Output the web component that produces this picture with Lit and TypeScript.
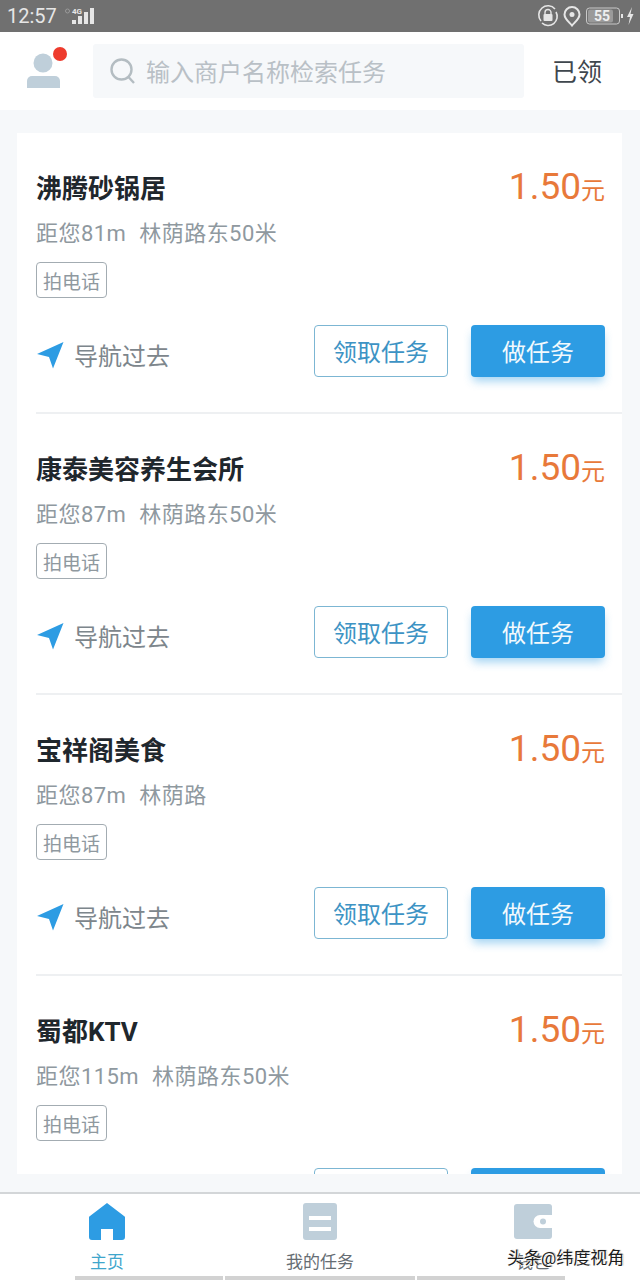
import { LitElement, html, css } from "lit";
import { customElement } from "lit/decorators.js";

const tasks = [
  { name: "沸腾砂锅居", dist: "距您81m", addr: "林荫路东50米" },
  { name: "康泰美容养生会所", dist: "距您87m", addr: "林荫路东50米" },
  { name: "宝祥阁美食", dist: "距您87m", addr: "林荫路" },
  { name: "蜀都KTV", dist: "距您115m", addr: "林荫路东50米" },
];

@customElement("app-root")
export class AppRoot extends LitElement {
  static styles = css`
    :host {
      display: flex;
      flex-direction: column;
      width: 640px;
      height: 1280px;
      overflow: hidden;
      background: #f6f8fa;
      font-family: Roboto, "Noto Sans CJK SC", sans-serif;
      position: relative;
    }

    /* status bar */
    .status {
      height: 32px;
      flex: none;
      background: #707070;
      color: #e6e6e6;
      display: flex;
      align-items: center;
      padding: 0 5px 0 7px;
      box-sizing: border-box;
    }
    .time {
      font-size: 20px;
      line-height: 32px;
      margin-right: 8px;
    }
    .spacer {
      flex: 1;
    }
    .status svg {
      display: block;
    }

    /* header */
    .header {
      height: 78px;
      flex: none;
      background: #fff;
      display: flex;
      align-items: center;
      box-sizing: border-box;
      padding-left: 27px;
    }
    .avatar {
      width: 66px;
      flex: none;
      margin-bottom: 4px;
    }
    .avatar svg {
      display: block;
    }
    .search {
      width: 431px;
      height: 54px;
      flex: none;
      background: #f6f8fa;
      border-radius: 3px;
      display: flex;
      align-items: center;
      gap: 10px;
      padding-left: 17px;
      box-sizing: border-box;
      font-size: 24px;
      color: #b9c0c6;
    }
    .search span {
      margin-top: -2px;
    }
    .taken {
      font-size: 25px;
      color: #3f474e;
      margin: -2px 0 0 28px;
    }

    /* list */
    .main {
      flex: 1;
      min-height: 0;
      padding: 23px 18px 18px 17px;
      display: flex;
    }
    .card {
      flex: 1;
      background: #fff;
      overflow: hidden;
    }
    .task {
      height: 281px;
      box-sizing: border-box;
      margin-left: 19px;
      padding: 35px 17px 0 0;
      border-bottom: 2px solid #eef0f2;
      display: flex;
      flex-direction: column;
    }
    .top {
      display: flex;
      justify-content: space-between;
      align-items: flex-start;
      height: 42px;
    }
    .name {
      font-size: 26px;
      font-weight: 700;
      line-height: 42px;
      color: #1f272d;
    }
    .price {
      color: #e8793a;
      font-size: 37px;
      line-height: 36px;
      margin-top: 1px;
    }
    .price span {
      font-size: 24px;
    }
    .sub {
      font-size: 22px;
      line-height: 32px;
      letter-spacing: 0.45px;
      color: #8f999f;
      margin-top: 8px;
      display: flex;
      gap: 13px;
    }
    .tag {
      align-self: flex-start;
      margin-top: 12px;
      width: 71px;
      height: 36px;
      box-sizing: border-box;
      border: 1.5px solid #a3acb2;
      border-radius: 4px;
      font-size: 19px;
      color: #8f999f;
      display: flex;
      align-items: center;
      justify-content: center;
    }
    .actions {
      display: flex;
      align-items: center;
      margin-top: 27px;
    }
    .nav {
      display: flex;
      align-items: center;
      gap: 10px;
      font-size: 24px;
      color: #7d868c;
      flex: 1;
      padding-top: 7px;
    }
    .nav svg {
      display: block;
    }
    .btn {
      width: 134px;
      height: 52px;
      box-sizing: border-box;
      border-radius: 4px;
      font-size: 24px;
      padding-bottom: 2px;
      display: flex;
      align-items: center;
      justify-content: center;
    }
    .ghost {
      border: 1.5px solid #7cb6d3;
      color: #3d93c4;
      background: #fff;
      margin-right: 23px;
    }
    .solid {
      background: #2d9ce3;
      color: #f2f9fd;
      box-shadow: 0 6px 10px -2px rgba(45, 156, 227, 0.45);
    }

    /* bottom tabs */
    .tabs {
      height: 86px;
      flex: none;
      background: #fff;
      border-top: 2px solid #d3d6d8;
      display: flex;
      position: relative;
    }
    .tab {
      position: relative;
      flex: none;
      display: flex;
      flex-direction: column;
      align-items: center;
      font-size: 17px;
      color: #666d73;
      padding-top: 9px;
      box-sizing: border-box;
    }
    .tab span {
      line-height: 22px;
      margin-top: 10px;
    }
    .tab.active {
      color: #3fa6cc;
    }
    .gestures {
      position: absolute;
      left: 0;
      right: 0;
      bottom: 0;
      height: 4px;
    }
    .gestures i {
      position: absolute;
      top: 0;
      height: 4px;
      background: #d2d2d2;
    }
    .mark {
      position: absolute;
      left: 507px;
      top: 1247px;
      font-size: 17px;
      line-height: 22px;
      color: #1c1c1c;
      text-shadow: 1px 1px 0 #fff, -1px 0 0 #fff, 1px 0 1px #888;
      white-space: nowrap;
    }
  `;

  private arrow() {
    return html`<svg width="28" height="28" viewBox="0 0 28 28">
      <path d="M27.500 1 L1 13 L13 16 L17 27.500 Z" fill="#2d9ce3" />
    </svg>`;
  }

  private renderTask(t: (typeof tasks)[number]) {
    return html`<div class="task">
      <div class="top">
        <div class="name">${t.name}</div>
        <div class="price">1.50<span>元</span></div>
      </div>
      <div class="sub"><span>${t.dist}</span><span>${t.addr}</span></div>
      <div class="tag">拍电话</div>
      <div class="actions">
        <div class="nav">${this.arrow()}<span>导航过去</span></div>
        <div class="btn ghost">领取任务</div>
        <div class="btn solid">做任务</div>
      </div>
    </div>`;
  }

  render() {
    return html`
      <div class="status">
        <span class="time">12:57</span>
        <svg width="32" height="22" viewBox="0 0 32 22">
          <circle cx="2.500" cy="6" r="2" fill="none" stroke="#9a9a9a" stroke-width="1" />
          <text x="7" y="9" font-size="8" font-weight="700" fill="#e6e6e6">4G</text>
          <rect x="7" y="15" width="4" height="4" fill="#e6e6e6" />
          <rect x="13" y="11" width="4" height="8" fill="#e6e6e6" />
          <rect x="19" y="7" width="4" height="12" fill="#e6e6e6" />
          <rect x="25" y="3" width="4" height="16" fill="#e6e6e6" />
        </svg>
        <div class="spacer"></div>
        <svg width="98" height="24" viewBox="0 0 98 24">
          <path d="M4 17 A9 9 0 0 1 18 5 M19 8 A9 9 0 0 1 5 19" fill="none" stroke="#e6e6e6" stroke-width="1.600" />
          <rect x="6.500" y="10" width="9" height="7" rx="1" fill="#e6e6e6" />
          <path d="M8 10 V8.500 a3 3 0 0 1 6 0 V10" fill="none" stroke="#e6e6e6" stroke-width="1.400" />
          <path d="M35 3 a7.500 7.500 0 0 1 7.500 7.500 c0 4.500 -5 8 -7.500 11 c-2.500 -3 -7.500 -6.500 -7.500 -11 A7.500 7.500 0 0 1 35 3 Z" fill="none" stroke="#e6e6e6" stroke-width="2" />
          <circle cx="35" cy="10.500" r="2.500" fill="#e6e6e6" />
          <rect x="49.500" y="4" width="33" height="16" rx="3" fill="none" stroke="#c9c9c9" stroke-width="1" />
          <rect x="51" y="5.500" width="25" height="13" rx="2" fill="#9a9a9a" />
          <text x="65" y="17" font-size="14" font-weight="700" text-anchor="middle" fill="#eee">55</text>
          <rect x="84" y="10" width="2" height="4" fill="#e6e6e6" />
          <path d="M95 3 L90 13 H93 L91.500 21 L96.500 10 H93.500 Z" fill="#e6e6e6" />
        </svg>
      </div>

      <div class="header">
        <div class="avatar">
          <svg width="42" height="44" viewBox="0 0 42 44">
            <circle cx="16" cy="16" r="9.500" fill="#bfcfda" />
            <path d="M0 41 V34 a5 5 0 0 1 5 -5 H28 a5 5 0 0 1 5 5 V41 Z" fill="#bfcfda" />
            <circle cx="33" cy="7" r="7" fill="#ee3b2d" />
          </svg>
        </div>
        <div class="search">
          <svg width="26" height="26" viewBox="0 0 26 26">
            <circle cx="11.500" cy="11.500" r="10" fill="none" stroke="#b4bdc2" stroke-width="2.400" />
            <path d="M18.500 19 L24 25" stroke="#b4bdc2" stroke-width="2.400" />
          </svg>
          <span>输入商户名称检索任务</span>
        </div>
        <div class="taken">已领</div>
      </div>

      <div class="main">
        <div class="card">${tasks.map((t) => this.renderTask(t))}</div>
      </div>

      <div class="tabs">
        <div class="tab active" style="width:214px">
          <svg width="36" height="38" viewBox="0 0 36 38">
            <path d="M18 0 L35 13 a2 2 0 0 1 1 2 V34 a3 3 0 0 1 -3 3 H24 V26 H12 V37 H3 a3 3 0 0 1 -3 -3 V15 a2 2 0 0 1 1 -2 Z" fill="#2d9ce3" />
          </svg>
          <span>主页</span>
        </div>
        <div class="tab" style="width:212px">
          <svg width="34" height="38" viewBox="0 0 34 38">
            <rect width="34" height="37" rx="3" fill="#bfcfda" />
            <rect x="6" y="13" width="22" height="4" fill="#fff" />
            <rect x="6" y="24" width="22" height="4" fill="#fff" />
          </svg>
          <span>我的任务</span>
        </div>
        <div class="tab" style="width:214px">
          <svg width="38" height="38" viewBox="0 0 38 38">
            <rect y="1" width="38" height="35" rx="3" fill="#bfcfda" />
            <path d="M38 12 H26 a6.500 6.500 0 0 0 0 13 H38 Z" fill="#fff" />
            <circle cx="29" cy="18.500" r="3" fill="#bfcfda" />
          </svg>
          <span>钱包</span>
        </div>
        <div class="gestures">
          <i style="left:75px;width:148px"></i>
          <i style="left:225px;width:190px"></i>
          <i style="left:417px;width:148px"></i>
        </div>
      </div>
      <div class="mark">头条@纬度视角</div>
    `;
  }
}
